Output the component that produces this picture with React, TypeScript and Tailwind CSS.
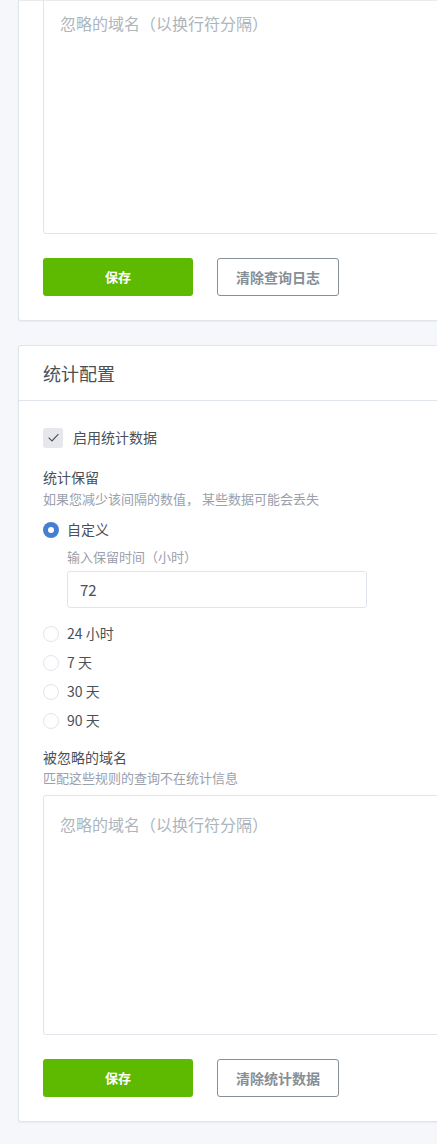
import React from "react";

const font = "font-['Noto_Sans_CJK_SC','Noto_Sans',sans-serif]";

function Radio({ checked, label }: { checked?: boolean; label: string }) {
  return (
    <label className="flex items-center h-[29px] cursor-pointer">
      {checked ? (
        <span className="w-4 h-4 rounded-full bg-[#467fcf] flex items-center justify-center">
          <span className="w-[6px] h-[6px] rounded-full bg-white" />
        </span>
      ) : (
        <span className="w-4 h-4 rounded-full border border-[#e0e5ec] bg-white" />
      )}
      <span className="ml-2 text-[14px] text-[#495057]">{label}</span>
    </label>
  );
}

function Buttons({ danger }: { danger: string }) {
  return (
    <div className="flex gap-6 mt-6">
      <button className="w-[150px] h-[38px] rounded-[3px] bg-[#5eba00] text-white text-[13px] font-bold">
        保存
      </button>
      <button className="w-[122px] h-[38px] rounded-[3px] border border-[#868e96] bg-white text-[#868e96] text-[14px] font-bold">
        {danger}
      </button>
    </div>
  );
}

export default function App() {
  return (
    <div className={`${font} bg-[#f5f7fb] w-full h-[1144px] overflow-hidden pl-[18px]`}>
      <div className="w-[700px]">
        {/* 查询日志卡片（上半部分已滚出） */}
        <div className="bg-white border border-t-[#e9ecef] border-[#e0e5ec] rounded-b-[3px] px-6 pb-6 shadow-[0_1px_2px_rgba(0,0,0,0.05)]">
          <textarea
            className="block w-full h-[234px] -mt-px border border-t-0 border-[#e0e5ec] rounded-b-[3px] px-4 pt-[11px] text-[16px] leading-6 resize-none outline-none placeholder:text-[#adb5bd]"
            placeholder="忽略的域名（以换行符分隔）"
          />
          <Buttons danger="清除查询日志" />
        </div>

        {/* 统计配置 */}
        <div className="mt-6 bg-white border border-[#e0e5ec] rounded-[3px] shadow-[0_1px_2px_rgba(0,0,0,0.05)]">
          <div className="h-[55px] flex items-center px-6 border-b border-[#e0e5ec]">
            <h3 className="text-[18px] text-[#495057]">统计配置</h3>
          </div>
          <div className="px-6 pt-[26px] pb-6">
            <label className="flex items-center">
              <span className="w-5 h-5 rounded-[3px] bg-[#e5e7ea] flex items-center justify-center">
                <svg width="13" height="13" viewBox="0 0 12 12" fill="none">
                  <path d="M1.5 6.2 L4.6 9.2 L10.5 2.8" stroke="#495057" strokeWidth="1" />
                </svg>
              </span>
              <span className="ml-[10px] text-[14px] text-[#495057]">启用统计数据</span>
            </label>

            <div className="mt-[19px]">
              <div className="text-[14px] leading-5 text-[#495057]">统计保留</div>
              <div className="text-[13px] leading-5 text-[#9aa0ac] mt-[2px]">
                如果您减少该间隔的数值， 某些数据可能会丢失
              </div>
            </div>

            <div className="mt-[6px]">
              <Radio checked label="自定义" />
              <div className="pl-6">
                <div className="text-[13px] text-[#9aa0ac] leading-5 mt-[3px]">输入保留时间（小时）</div>
                <input
                  className="mt-[4px] w-[300px] h-[37px] border border-[#e0e5ec] rounded-[3px] px-3 text-[15px] text-[#495057] outline-none"
                  defaultValue="72"
                />
              </div>
              <div className="mt-[11px]">
                <Radio label="24 小时" />
                <Radio label="7 天" />
                <Radio label="30 天" />
                <Radio label="90 天" />
              </div>
            </div>

            <div className="mt-[12px]">
              <div className="text-[14px] leading-5 text-[#495057]">被忽略的域名</div>
              <div className="text-[13px] leading-5 text-[#9aa0ac] mt-[1px]">匹配这些规则的查询不在统计信息</div>
            </div>
            <textarea
              className="block mt-[7px] w-full h-[240px] border border-[#e0e5ec] rounded-[3px] px-4 pt-4 text-[16px] leading-6 resize-none outline-none placeholder:text-[#adb5bd]"
              placeholder="忽略的域名（以换行符分隔）"
            />
            <Buttons danger="清除统计数据" />
          </div>
        </div>
      </div>
    </div>
  );
}
